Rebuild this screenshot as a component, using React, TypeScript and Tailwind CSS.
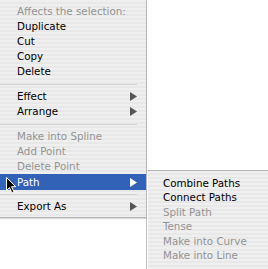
import * as React from "react";

interface MenuEntry {
  id: number;
  label?: string;
  kind: "item" | "header" | "separator";
  disabled?: boolean;
  submenu?: boolean;
  active?: boolean;
}

const mainMenu: MenuEntry[] = [
  { id: 1, kind: "header", label: "Affects the selection:" },
  { id: 2, kind: "item", label: "Duplicate" },
  { id: 3, kind: "item", label: "Cut" },
  { id: 4, kind: "item", label: "Copy" },
  { id: 5, kind: "item", label: "Delete" },
  { id: 6, kind: "separator" },
  { id: 7, kind: "item", label: "Effect", submenu: true },
  { id: 8, kind: "item", label: "Arrange", submenu: true },
  { id: 9, kind: "separator" },
  { id: 10, kind: "item", label: "Make into Spline", disabled: true },
  { id: 11, kind: "item", label: "Add Point", disabled: true },
  { id: 12, kind: "item", label: "Delete Point", disabled: true },
  { id: 13, kind: "item", label: "Path", submenu: true, active: true },
  { id: 14, kind: "separator" },
  { id: 15, kind: "item", label: "Export As", submenu: true },
];

const pathMenu: MenuEntry[] = [
  { id: 1, kind: "item", label: "Combine Paths" },
  { id: 2, kind: "item", label: "Connect Paths" },
  { id: 3, kind: "item", label: "Split Path", disabled: true },
  { id: 4, kind: "item", label: "Tense", disabled: true },
  { id: 5, kind: "item", label: "Make into Curve", disabled: true },
  { id: 6, kind: "item", label: "Make into Line", disabled: true },
];

const stripes =
  "bg-[repeating-linear-gradient(to_bottom,#efefef_0px,#efefef_2px,#e8e8e8_2px,#e8e8e8_4px)]";

const Arrow: React.FC<{ light?: boolean }> = ({ light }) => (
  <svg width="7" height="9" viewBox="0 0 7 9" className="shrink-0">
    <path d="M0 0 L7 4.5 L0 9 Z" fill={light ? "#ffffff" : "#555555"} />
  </svg>
);

const Cursor: React.FC = () => (
  <svg
    width="11"
    height="17"
    viewBox="0 0 11 17"
    className="absolute left-[6px] top-[177px]"
  >
    <path
      d="M0.5 0.5 L0.5 13.5 L3.5 10.5 L6 16 L8 15 L5.5 9.7 L9.8 9.7 Z"
      fill="#000"
      stroke="#fff"
      strokeWidth="1"
      strokeLinejoin="round"
    />
  </svg>
);

const MainMenu: React.FC = () => (
  <div
    className={`w-[146px] border-b border-[#b4b4b4] pt-[4px] pb-[3px] pr-[9px] ${stripes} shadow-[0_1px_1px_rgba(0,0,0,0.15)]`}
  >
    {mainMenu.map((item) => {
      if (item.kind === "separator") {
        return (
          <div
            key={item.id}
            className={`flex items-center ${item.id === 14 ? "h-[9px]" : "h-[10px]"}`}
          >
            <div className="w-full h-px bg-[#d2d2d2]" />
          </div>
        );
      }
      const color = item.active
        ? "text-white"
        : item.disabled || item.kind === "header"
        ? "text-[#939393]"
        : "text-black";
      return (
        <div
          key={item.id}
          className={`flex items-center justify-between pl-[17px] ${
            item.active ? "h-[16px] bg-[#3262b8] -mr-[9px] pr-[9px]" : "h-[15px]"
          } ${color}`}
        >
          <span className="leading-none">{item.label}</span>
          {item.submenu && <Arrow light={item.active} />}
        </div>
      );
    })}
  </div>
);

const SubMenu: React.FC = () => (
  <div
    className={`absolute left-[148px] top-[170px] w-[120px] h-[99px] border-t border-[#b4b4b4] pt-[5px] pl-[15px] ${stripes}`}
  >
    {pathMenu.map((item) => (
      <div
        key={item.id}
        className={`flex items-center h-[14.4px] ${
          item.disabled ? "text-[#939393]" : "text-black"
        }`}
      >
        <span className="leading-none whitespace-nowrap">{item.label}</span>
      </div>
    ))}
  </div>
);

export default function App() {
  return (
    <div className="relative w-[268px] h-[269px] overflow-hidden bg-white text-[10.3px] font-['DejaVu_Sans',sans-serif]">
      <div className="flex h-full">
        <div className="w-[147px] h-full border-r border-[#bdbdbd]">
          <MainMenu />
        </div>
      </div>
      <SubMenu />
      <Cursor />
    </div>
  );
}
